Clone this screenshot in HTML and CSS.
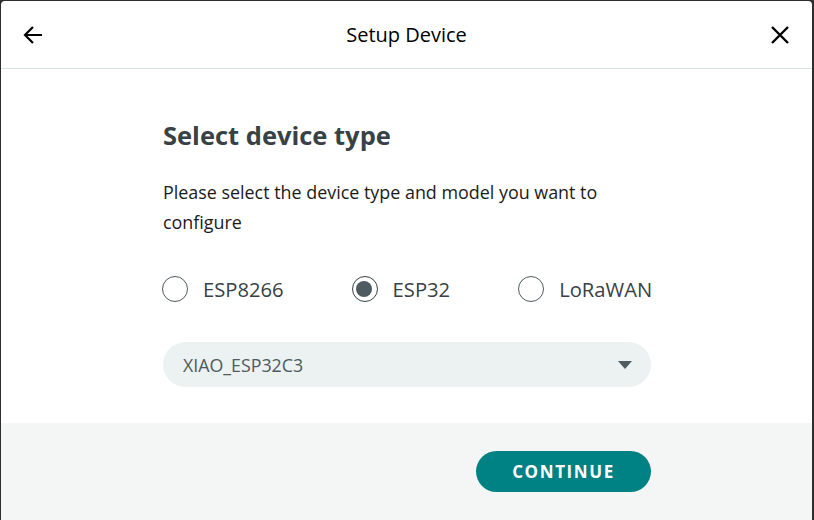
FILE: index.html
```html
<!DOCTYPE html>
<html>
<head>
<meta charset="utf-8">
<link rel="stylesheet" href="styles.css">
</head>
<body>
<div class="dialog">
  <header class="head">
    <button class="icon-btn" aria-label="Back">
      <svg width="22" height="22" viewBox="0 0 22 22"><path d="M20 11H3M11 3L3 11L11 19" fill="none" stroke="#000" stroke-width="2.2"/></svg>
    </button>
    <div class="title">Setup Device</div>
    <button class="icon-btn" aria-label="Close">
      <svg width="20" height="20" viewBox="0 0 20 20"><path d="M2 2L18 18M18 2L2 18" fill="none" stroke="#000" stroke-width="2.4"/></svg>
    </button>
  </header>
  <main class="body">
    <div class="content">
      <h1 class="heading">Select device type</h1>
      <p class="desc">Please select the device type and model you want to configure</p>
      <div class="radios">
        <label class="radio"><span class="circle"></span><span class="lbl">ESP8266</span></label>
        <label class="radio"><span class="circle checked"></span><span class="lbl">ESP32</span></label>
        <label class="radio"><span class="circle"></span><span class="lbl">LoRaWAN</span></label>
      </div>
      <div class="select">
        <span class="sel-text">XIAO_ESP32C3</span>
        <svg class="caret" width="14" height="8" viewBox="0 0 14 8"><path d="M0 0H14L7 8Z" fill="#4e5b61"/></svg>
      </div>
    </div>
  </main>
  <footer class="foot">
    <div class="foot-inner">
      <button class="btn">CONTINUE</button>
    </div>
  </footer>
</div>
</body>
</html>
```
FILE: styles.css
```css
* { box-sizing: border-box; }
html, body { margin: 0; height: 520px; overflow: hidden; }
body {
  background: #2e2e2e;
  padding: 1px 2px 0 1px;
  font-family: "Open Sans", "Noto Sans", sans-serif;
}
.dialog {
  background: #fff;
  height: 522px;
  border-radius: 4px;
  overflow: hidden;
  display: flex;
  flex-direction: column;
}
.head {
  height: 68px;
  border-bottom: 1px solid #dae3e3;
  display: flex;
  align-items: center;
  justify-content: space-between;
  padding: 0 20px 0 20px;
}
.icon-btn {
  background: none;
  border: 0;
  padding: 0;
  width: 24px;
  height: 24px;
  display: flex;
  align-items: center;
  justify-content: center;
}
.title {
  font-size: 20px;
  color: #000;
  margin-top: 0;
}
.body {
  padding: 50px 0 36px;
  display: flex;
  justify-content: center;
}
.content {
  width: 488px;
  margin-left: 1px;
}
.heading {
  margin: 0;
  font-size: 25.5px;
  line-height: 32px;
  font-weight: 700;
  color: #374146;
}
.desc {
  margin: 26px 0 0;
  font-size: 17.9px;
  line-height: 30px;
  color: #1a1a1a;
  width: 470px;
}
.radios {
  margin-top: 39px;
  display: flex;
  gap: 69px;
  height: 26px;
}
.radio {
  display: flex;
  align-items: center;
  gap: 15px;
}
.circle {
  width: 26px;
  height: 26px;
  border: 1px solid #4e5b61;
  border-radius: 50%;
  margin-left: -1px;
  position: relative;
}
.circle.checked {
  border-width: 1.5px;
  border-color: #374146;
}
.circle.checked::after {
  content: "";
  position: absolute;
  left: 3.5px;
  top: 3.5px;
  width: 16px;
  height: 16px;
  border-radius: 50%;
  background: #4e5b61;
}
.lbl {
  font-size: 20.2px;
  color: #374146;
}
.select {
  margin-top: 40px;
  height: 45px;
  border-radius: 23px;
  background: #ecf1f1;
  display: flex;
  align-items: center;
  justify-content: space-between;
  padding: 0 19px 0 20px;
}
.sel-text {
  font-size: 17.8px;
  color: #4e5b61;
}
.foot {
  flex: 1;
  background: #f4f6f6;
  display: flex;
  justify-content: center;
  padding-top: 28px;
}
.foot-inner {
  width: 488px;
  margin-left: 1px;
  display: flex;
  justify-content: flex-end;
  align-items: flex-start;
}
.btn {
  width: 175px;
  height: 41px;
  border: 0;
  border-radius: 21px;
  background: #008184;
  color: #fff;
  font-family: "Open Sans", sans-serif;
  font-weight: 700;
  font-size: 17px;
  letter-spacing: 1.6px;
}
```
